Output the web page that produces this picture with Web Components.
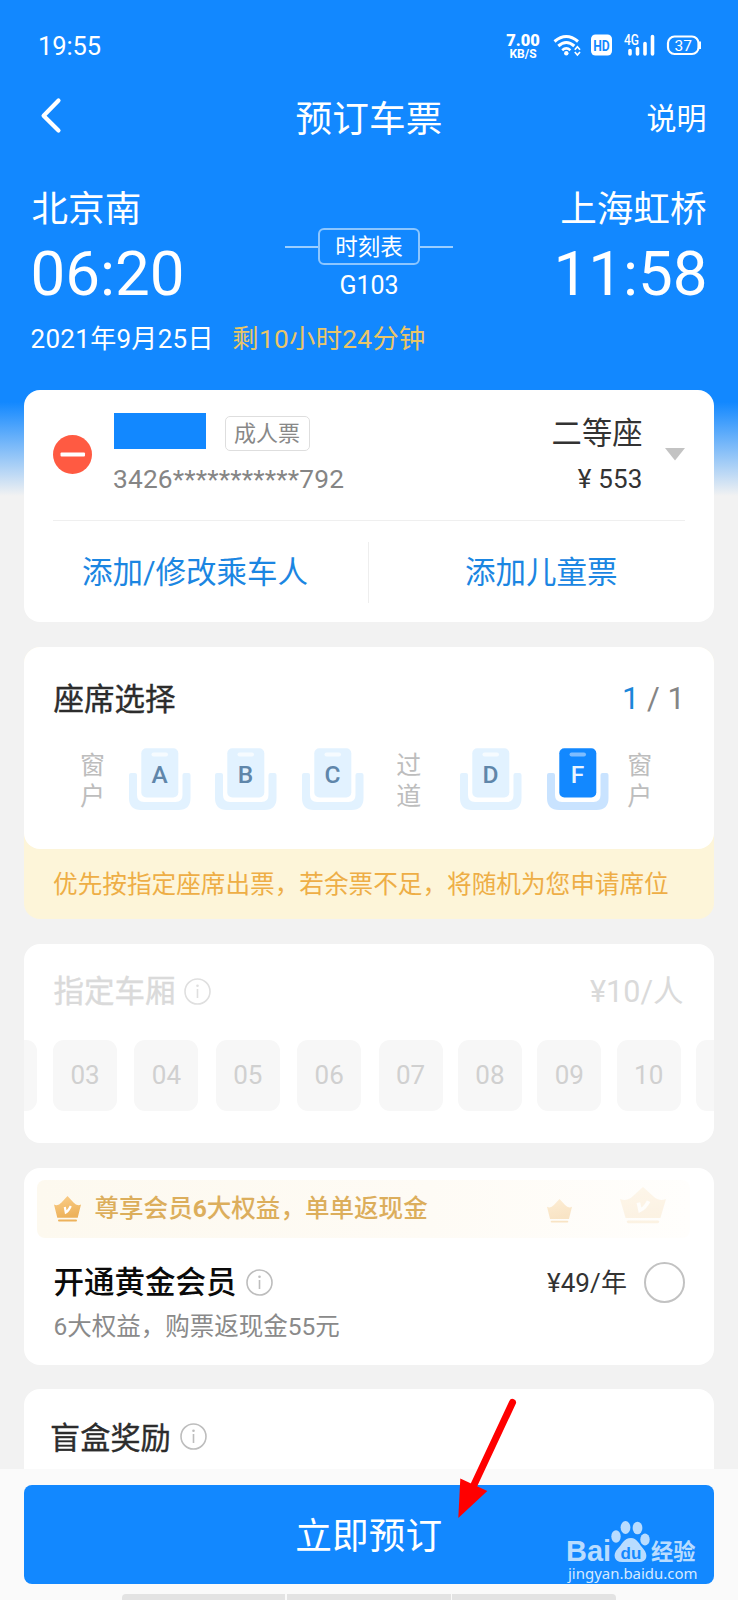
<!DOCTYPE html>
<html lang="zh-CN">
<head>
<meta charset="utf-8">
<title>预订车票</title>
<style>
html,body{margin:0;padding:0}
body{font-family:Roboto,"Noto Sans CJK SC",sans-serif;background:#f2f2f2;color:#333}
</style>
</head>
<body>
<booking-app></booking-app>
<script>
function define(name, html, setup) {
  const tpl = document.createElement('template');
  tpl.innerHTML = '<style>*{box-sizing:border-box}:host{display:block;box-sizing:border-box}</style>' + html;
  customElements.define(name, class extends HTMLElement {
    constructor() {
      super();
      this.attachShadow({ mode: 'open' }).appendChild(tpl.content.cloneNode(true));
      if (setup) setup(this, this.shadowRoot);
    }
  });
}

define('status-bar', `
<style>
:host{display:flex;height:90px;align-items:center;color:#fff;padding:0 37px 0 38px}
.time{font-size:25.500px;line-height:30px;flex:1;letter-spacing:-.1px;padding-top:1px}
.speed{width:34px;text-align:center;font-weight:700;margin-right:13px}
.speed b{display:block;font-size:16.500px;line-height:17px;margin-top:0}
.speed i{display:block;font-style:normal;font-size:12px;line-height:9px;margin-top:1px}
svg{display:block}
</style>
<span class="time">19:55</span>
<span class="speed"><b>7.00</b><i>KB/S</i></span>
<svg width="148" height="30" viewBox="553 30 148 30" fill="none" stroke="#fff">
  <path d="M554.500 41.500Q566.300 31.500 578 41.500" stroke-width="3"/>
  <path d="M558.300 46Q566.300 39 574.300 46" stroke-width="3"/>
  <path d="M562.200 50.200Q566.300 46.500 570.400 50.200" stroke-width="2.600"/>
  <circle cx="566.300" cy="53.200" r="2.200" fill="#fff" stroke="none"/>
  <path d="M574.800 49.800L577.400 46.800L580 49.800M574.800 52L577.400 55L580 52" stroke-width="1.700"/>
  <rect x="591" y="34.500" width="21" height="21" rx="4.500" fill="#fff" stroke="none"/>
  <text x="601.500" y="50.500" font-size="15" font-weight="700" fill="#1288ff" stroke="none" text-anchor="middle" textLength="16.500" lengthAdjust="spacingAndGlyphs" font-family="Roboto">HD</text>
  <text x="624" y="45.300" font-size="14" font-weight="500" fill="#fff" stroke="none" textLength="15" lengthAdjust="spacingAndGlyphs" font-family="Roboto">4G</text>
  <path d="M630 50.500V54M637.500 48.500V54M645 43.500V54M652.500 36.500V54" stroke-width="3.600" stroke-linecap="round"/>
  <rect x="668" y="36.500" width="30.500" height="17.500" rx="6.500" stroke-width="2.200"/>
  <path d="M700 41.500V49" stroke-width="2.400"/>
  <text x="683.300" y="50.600" font-size="15.500" fill="#fff" stroke="none" text-anchor="middle" font-family="Roboto">37</text>
</svg>`);

define('nav-bar', `
<style>
:host{display:grid;grid-template-columns:1fr auto 1fr;height:56px;align-items:center;color:#fff;padding:0 31.500px 0 40px}
svg{display:block;margin-top:-5px}
h1{margin:0;font-size:36.700px;line-height:56px;font-weight:400;padding:1.500px 8.500px 0 0}
span{justify-self:end;font-size:30px;line-height:56px;padding-top:1px}
</style>
<svg width="22" height="38" viewBox="0 0 22 38"><path d="M18.500 3.500L3.600 18.700L18.500 33.500" fill="none" stroke="#fff" stroke-width="4.200" stroke-linecap="round" stroke-linejoin="round"/></svg>
<h1><slot></slot></h1><span>说明</span>`);

define('trip-header', `
<style>
:host{color:#fff;height:244px;padding:41.500px 31.500px 0}
.grid{display:grid;grid-template-columns:1fr 168px 1fr;height:130px}
.end{text-align:right}
.st{font-size:36.600px;line-height:44px}
.t{font-size:61.900px;line-height:86px;margin:-1px 0 0 -1px}
.end .t{margin:-1px -1px 0 0}
.mid{padding-top:40.500px;text-align:center}
.line{display:flex;align-items:center}
.line:before,.line:after{content:"";flex:1;height:2px;background:#9bceff}
.box{width:102px;height:37px;border:2px solid #8cc6ff;border-radius:6px;font-size:22.500px;line-height:34px}
.no{font-size:25px;line-height:42px}
.date{display:flex;gap:18.500px;font-size:26px;line-height:43px;margin-left:-1px;letter-spacing:.3px}
.left{color:#eac568;font-size:26.300px}
</style>
<div class="grid">
  <div><div class="st">北京南</div><div class="t">06:20</div></div>
  <div class="mid"><div class="line"><div class="box">时刻表</div></div><div class="no">G103</div></div>
  <div class="end"><div class="st">上海虹桥</div><div class="t">11:58</div></div>
</div>
<div class="date"><span>2021年9月25日</span><span class="left">剩10小时24分钟</span></div>`);

define('ui-card', `
<style>:host{background:#fff;border-radius:16px;overflow:hidden;margin:0 24.500px 0 24px;flex:none}</style><slot></slot>`);

define('info-icon', `
<style>:host{color:#bdbdbd;width:27px;height:27px}svg{display:block}</style>
<svg width="27" height="27" viewBox="0 0 27 27" fill="none" stroke="currentColor" stroke-width="1.600"><circle cx="13.500" cy="13.500" r="12.500"/><path d="M13.500 11V20"/><circle cx="13.500" cy="7.700" r="1.300" fill="currentColor" stroke="none"/></svg>`);

define('passenger-panel', `
<style>
:host{height:232px}
.row{display:flex;height:130px;padding:0 29px}
.minus{align-self:center;width:39px;height:39px;margin-right:22px;display:block;position:relative;top:-.5px}
.info{flex:1;padding-top:23px}
.name{display:flex;align-items:center;height:38px;gap:19px}
.mask{width:92px;height:36px;background:#1288ff;margin-top:-2px}
.tag{height:35px;width:85px;text-align:center;border:1.500px solid #dedede;border-radius:5px;font-size:22px;line-height:33px;color:#888;margin-top:3px;padding-right:1px}
.id{font-size:26.300px;line-height:40px;margin:8px 0 0 -1px;color:#858585;letter-spacing:.17px}
.seat{text-align:right;padding-top:23px;margin-right:22px}
.cls{font-size:30.300px;line-height:38px;height:38px;padding-top:2px}
.fee{font-size:26px;line-height:40px;margin-top:8px;letter-spacing:.15px}
.tri{align-self:center;display:block;position:relative;top:-1px}
.hr{height:1px;background:#efefef;margin:0 28.500px}
.links{display:grid;grid-template-columns:344px 1fr;height:101px;align-items:center}
.links span{text-align:center;font-size:30.500px;line-height:61px;color:#1b86e2;position:relative;top:1px;padding-right:2px}
.links span+span{border-left:1px solid #eee;padding:0}
</style>
<div class="row">
  <svg class="minus" viewBox="0 0 39 39"><circle cx="19.500" cy="19.500" r="19.500" fill="#ff5a42"/><rect x="7.500" y="17.500" width="24.500" height="4" rx="1" fill="#fff"/></svg>
  <div class="info"><div class="name"><div class="mask"></div><div class="tag">成人票</div></div><div class="id">3426***********792</div></div>
  <div class="seat"><div class="cls">二等座</div><div class="fee">¥ 553</div></div>
  <svg class="tri" width="20" height="13" viewBox="0 0 20 13"><path d="M0 0H20L10 12.500Z" fill="#c3c3c3"/></svg>
</div>
<div class="hr"></div>
<div class="links"><span>添加/修改乘车人</span><span>添加儿童票</span></div>`);

define('seat-icon', `
<style>
:host{--back:#e2f2ff;--arm:#e2f2ff;--ink:#5f86aa;--slot:#f6fbff;width:62px;height:62px;flex:none}
:host([selected]){--back:#1288ff;--arm:#c9e3ff;--ink:#eaf5ff;--slot:#7fbdff}
svg{display:block}
text{fill:var(--ink);font:500 24.500px Roboto;text-anchor:middle}
</style>
<svg width="62" height="62" viewBox="0 0 62 62">
<path d="M0 27Q0 25 2 25H6Q8 25 8 27V47Q8 54 15 54H46.500Q53.500 54 53.500 47V27Q53.500 25 55.500 25H59.500Q61.500 25 61.500 27V50Q61.500 62 49.500 62H12Q0 62 0 50Z" fill="var(--arm)"/>
<rect x="12.300" y=".3" width="37" height="49.200" rx="5" fill="var(--back)"/>
<rect x="22.500" y="4.500" width="16.500" height="4" rx="2" fill="var(--slot)"/>
<text x="30.600" y="35.300"></text></svg>`, (host, root) => {
  root.querySelector('text').textContent = host.getAttribute('label');
});

define('seat-panel', `
<style>
:host{background:#fdf5d9;height:272px}
.body{background:#fff;border-radius:0 0 16px 16px;height:202px;padding-top:25px}
.head{display:flex;justify-content:space-between;padding:0 28.500px 0 29.500px;font-size:30.500px;line-height:53px}
.head b{font-weight:400;color:#2c2c2c;-webkit-text-stroke:.4px;position:relative;top:.5px}
.cnt{color:#858585;font-size:31px}.cnt i{font-style:normal;color:#1b86d9}
.seats{display:flex;gap:24.200px;padding-left:56px;margin-top:22.500px;align-items:flex-start}
.v{width:25px;font-size:25px;line-height:31px;color:#bdbdbd;margin-top:2px}
.aisle{margin:2px 15px 0 8.500px}
.last{margin-left:-5.500px}
.tip{font-size:24.630px;line-height:72px;height:70px;color:#eeae46;padding-left:29px;white-space:nowrap}
</style>
<div class="body">
  <div class="head"><b>座席选择</b><span class="cnt"><i>1</i> / 1</span></div>
  <div class="seats">
    <div class="v">窗户</div><seat-icon label="A"></seat-icon><seat-icon label="B"></seat-icon><seat-icon label="C"></seat-icon>
    <div class="v aisle">过道</div><seat-icon label="D"></seat-icon><seat-icon label="F" selected></seat-icon><div class="v last">窗户</div>
  </div>
</div>
<div class="tip">优先按指定座席出票，若余票不足，将随机为您申请席位</div>`);

define('coach-panel', `
<style>
:host{height:199px;padding-top:22px;color:#dadada}
.head{display:flex;align-items:center;padding:0 30px 0 29.500px;line-height:54px;height:52px;font-size:30.500px}
.head b{font-weight:400;-webkit-text-stroke:.4px}
info-icon{margin:-1px auto 0 8px;color:#dfdfdf}
.list{display:flex;margin:22px 0 0 -51px;width:760px}
.list div{width:64px;height:71px;border-radius:11px;background:#f7f7f7;color:#d0d0d0;font-size:26px;line-height:70px;text-align:center;margin-right:17.400px;flex:none}
.list div:first-child,.list div:nth-child(n+6){margin-right:15.400px}
.list div:first-child{margin-right:16px}
</style>
<div class="head"><b>指定车厢</b><info-icon></info-icon><span>¥10/人</span></div>
<div class="list"><div></div><div>03</div><div>04</div><div>05</div><div>06</div><div>07</div><div>08</div><div>09</div><div>10</div><div></div></div>`);

define('crown-icon', `
<style>:host{width:27px;height:26px;flex:none}svg{display:block;width:100%;height:100%}:host([plain]) .v{display:none}</style>
<svg viewBox="0 0 27 26" preserveAspectRatio="none"><defs><linearGradient id="g" x1="0" y1="0" x2=".3" y2="1"><stop offset="0" stop-color="#fbcf8b"/><stop offset="1" stop-color="#edb25b"/></linearGradient></defs>
<path d="M0 8.500Q4 10.500 7.500 6.500L13.500 0L19.500 6.500Q23 10.500 27 8.500L23.700 21.800H3.300Z" fill="url(#g)"/><rect x="4" y="23.500" width="19" height="2" rx="1" fill="#edb25b"/>
<path class="v" d="M10.800 11L11.800 16.500Q14.500 15 16.800 10" fill="none" stroke="#fff" stroke-width="2.200"/></svg>`);

define('member-panel', `
<style>
:host{height:197px;padding-top:12px}
.ban{display:flex;align-items:center;height:58px;margin:0 24px 0 12.500px;border-radius:8px;background:linear-gradient(90deg,#fdf9ef,#fefbf5 60%,#fffefc);padding-left:17.500px}
.ban b{font-size:24.560px;font-weight:500;line-height:56px;color:#dcae5c;margin:0 0 0 13.500px}
.ban b i{font-style:normal;font-weight:700}
.c2{width:25px;height:24px;opacity:.32;margin-left:119px;margin-top:3px}
.c3{width:46px;height:37px;opacity:.14;margin-left:48px;margin-top:-7px}
.row{display:flex;align-items:center;height:50px;margin-top:19.500px;padding:0 28.500px 0 29.500px}
.row b{font-size:30.500px;font-weight:500;color:#0a0a0a;line-height:50px;padding-top:1.500px}
info-icon{margin:0 auto 0 9px}
.fee{font-size:26px;line-height:50px;letter-spacing:.1px}
.radio{width:41px;height:41px;border:2px solid #c2c2c2;border-radius:50%;margin-left:17px}
.sub{font-size:24.500px;line-height:36px;color:#8a8a8a;padding-left:29.500px;margin-top:1px}
</style>
<div class="ban"><crown-icon></crown-icon><b>尊享会员<i>6</i>大权益，单单返现金</b><crown-icon class="c2" plain></crown-icon><crown-icon class="c3"></crown-icon></div>
<div class="row"><b>开通黄金会员</b><info-icon></info-icon><span class="fee">¥49/年</span><div class="radio"></div></div>
<div class="sub">6大权益，购票返现金55元</div>`);

define('prize-panel', `
<style>
:host{display:flex;height:94px;align-items:center;padding-left:26px;font-size:30.200px;color:#2c2c2c}
span{-webkit-text-stroke:.4px;position:relative;top:-.5px}
info-icon{margin-left:9px}
</style><span><slot></slot></span><info-icon></info-icon>`);

define('booking-footer', `
<style>
:host{height:131px;background:#fafafa;padding:16px 24.500px 0 24px;flex:none}
.btn{height:98.500px;border-radius:8px;background:#1288ff;color:#fff;font-size:36.700px;line-height:104px;text-align:center}
.bar{display:flex;gap:1.500px;width:494px;margin:10.500px auto 0;height:10px;border-radius:4px;overflow:hidden}
.bar i{flex:1;background:#e3e3e3}
</style>
<div class="btn"><slot></slot></div>
<div class="bar"><i></i><i></i><i></i></div>`);

define('pointer-arrow', `
<style>:host{position:absolute;left:450px;top:1390px}svg{display:block}</style>
<svg width="74" height="134" viewBox="450 1390 74 134"><path d="M512.500 1402.500L473 1487" stroke="#f00" stroke-width="7" stroke-linecap="round"/><path d="M458.300 1518L460.300 1478.500L487.300 1491Z" fill="#f00"/></svg>`);

define('site-mark', `
<style>:host{position:absolute;left:560px;top:1515px}svg{display:block}</style>
<svg width="145" height="72" viewBox="560 1515 145 72" fill="#b9dcff">
<text x="566" y="1561" font-family="Liberation Sans" font-weight="700" font-size="29" textLength="45" lengthAdjust="spacingAndGlyphs">Bai</text>
<ellipse cx="616" cy="1536.500" rx="4.700" ry="6.200"/><ellipse cx="625.500" cy="1527.500" rx="4.900" ry="6.500"/><ellipse cx="637.500" cy="1528" rx="4.900" ry="6.300"/><ellipse cx="645" cy="1539.500" rx="4.700" ry="6"/>
<path d="M631 1538C637 1538 639 1544 643.500 1549C648.500 1555 647 1562 639.500 1562H622C614 1562 612.500 1554 617.500 1549C622 1544.500 624 1538 631 1538Z"/>
<text x="631" y="1558.500" text-anchor="middle" fill="#1288ff" font-family="Liberation Sans" font-weight="700" font-size="17">du</text>
<text x="651" y="1559.500" font-family="Noto Sans CJK SC" font-weight="700" font-size="22.300">经验</text>
<text x="568" y="1579" font-family="Noto Sans" font-size="15" textLength="129.500" lengthAdjust="spacingAndGlyphs" fill="#d6eaff">jingyan.baidu.com</text></svg>`);

define('booking-app', `
<style>
:host{position:relative;width:738px;height:1600px;display:flex;flex-direction:column;overflow:hidden;background:linear-gradient(#1288ff 0 402px,#f2f2f2 496px)}
main{flex:1;min-height:0;overflow:hidden;display:flex;flex-direction:column;gap:25px}
.prize{margin-top:-1px;height:96px}
</style>
<status-bar></status-bar><nav-bar>预订车票</nav-bar><trip-header></trip-header>
<main>
<ui-card><passenger-panel></passenger-panel></ui-card>
<ui-card><seat-panel></seat-panel></ui-card>
<ui-card><coach-panel></coach-panel></ui-card>
<ui-card><member-panel></member-panel></ui-card>
<ui-card class="prize"><prize-panel>盲盒奖励</prize-panel></ui-card>
</main>
<booking-footer>立即预订</booking-footer>
<pointer-arrow></pointer-arrow><site-mark></site-mark>`);
</script>
</body>
</html>
